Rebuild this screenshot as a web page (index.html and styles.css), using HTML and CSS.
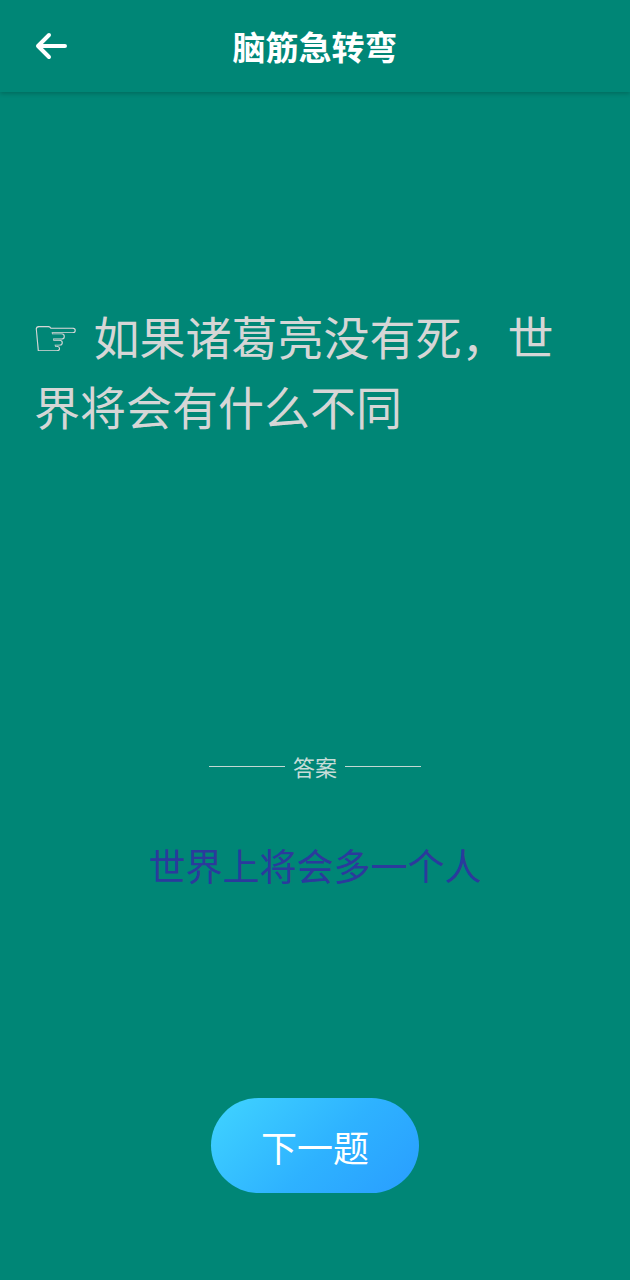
FILE: index.html
```html
<!DOCTYPE html>
<html lang="zh">
<head>
<meta charset="utf-8">
<link rel="stylesheet" href="styles.css">
</head>
<body>
<div class="page">
  <header class="bar">
    <svg class="back" viewBox="0 0 34 28" width="34" height="28">
      <path d="M31 14H4M15 3L4 14l11 11" fill="none" stroke="#fff" stroke-width="4" stroke-linecap="round" stroke-linejoin="round"/>
    </svg>
    <h1 class="title">脑筋急转弯</h1>
  </header>
  <main class="content">
    <p class="question"><span class="hand">☞</span> 如果诸葛亮没有死，世界将会有什么不同</p>
    <div class="label"><span class="line"></span><span class="label-text">答案</span><span class="line"></span></div>
    <p class="answer">世界上将会多一个人</p>
    <div class="actions"><button class="next">下一题</button></div>
  </main>
</div>
</body>
</html>
```
FILE: styles.css
```css
html, body {
  margin: 0;
  padding: 0;
  background: #008676;
}
body {
  font-family: "Noto Sans CJK SC", "Noto Sans", sans-serif;
}
.page {
  width: 630px;
  min-height: 1280px;
  display: flex;
  flex-direction: column;
}
.bar {
  height: 92px;
  display: flex;
  align-items: center;
  justify-content: center;
  position: relative;
  background: #008676;
  box-shadow: 0 2px 4px rgba(0, 0, 0, 0.18);
}
.back {
  position: absolute;
  left: 34px;
  top: 32px;
}
.title {
  margin: 0;
  color: #fff;
  font-size: 33px;
  font-weight: 700;
}
.content {
  display: flex;
  flex-direction: column;
  padding: 0 40px 0 34px;
}
.question {
  margin: 208px 0 0;
  color: #d6d6d6;
  font-size: 46px;
  line-height: 70px;
}
.hand {
  display: inline-block;
  font-family: "DejaVu Sans", sans-serif;
  font-size: 55px;
  line-height: 0;
  vertical-align: -2px;
  margin-left: -3px;
  margin-right: 3px;
}
.label {
  margin-top: 310px;
  display: flex;
  align-items: center;
  justify-content: center;
  gap: 8px;
  color: #c6dcd8;
  font-size: 22px;
  padding-left: 6px;
}
.line {
  width: 76px;
  height: 1px;
  background: #c4d8d3;
}
.answer {
  margin: 58px 0 0;
  text-align: center;
  color: #2b3a9c;
  font-size: 37px;
  line-height: 50px;
  padding-left: 6px;
}
.actions {
  display: flex;
  justify-content: center;
  margin-top: 208px;
  padding-left: 6px;
}
.next {
  width: 208px;
  height: 95px;
  border: none;
  border-radius: 48px;
  background: linear-gradient(135deg, #40d4ff 0%, #2eb2ff 55%, #299dff 100%);
  color: #fff;
  font-family: "Noto Sans CJK SC", sans-serif;
  font-size: 36px;
}
```
